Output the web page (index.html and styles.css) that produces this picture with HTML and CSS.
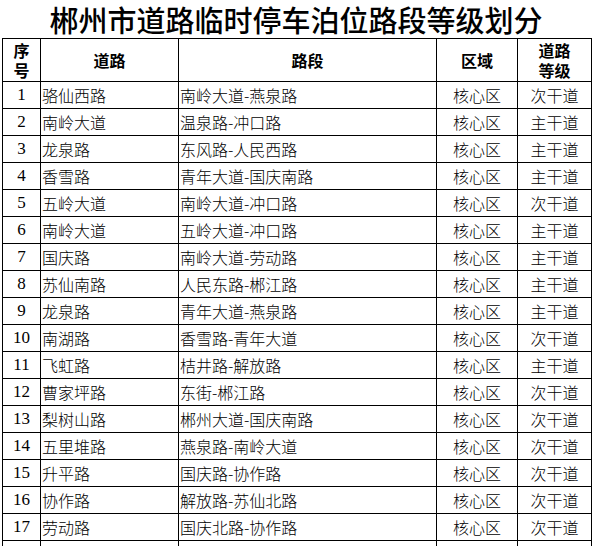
FILE: index.html
```html
<!DOCTYPE html>
<html lang="zh-CN">
<head>
<meta charset="utf-8">
<title>郴州市道路临时停车泊位路段等级划分</title>
<link rel="stylesheet" href="styles.css">
</head>
<body>
<h1 class="title">郴州市道路临时停车泊位路段等级划分</h1>
<table class="grid">
  <colgroup>
    <col class="c-no"><col class="c-road"><col class="c-seg"><col class="c-area"><col class="c-level">
  </colgroup>
  <thead>
    <tr class="head">
      <th>序<br>号</th><th>道路</th><th>路段</th><th>区域</th><th>道路<br>等级</th>
    </tr>
  </thead>
  <tbody>
    <tr><td class="no">1</td><td class="l">骆仙西路</td><td class="l">南岭大道-燕泉路</td><td>核心区</td><td>次干道</td></tr>
    <tr><td class="no">2</td><td class="l">南岭大道</td><td class="l">温泉路-冲口路</td><td>核心区</td><td>主干道</td></tr>
    <tr><td class="no">3</td><td class="l">龙泉路</td><td class="l">东风路-人民西路</td><td>核心区</td><td>主干道</td></tr>
    <tr><td class="no">4</td><td class="l">香雪路</td><td class="l">青年大道-国庆南路</td><td>核心区</td><td>主干道</td></tr>
    <tr><td class="no">5</td><td class="l">五岭大道</td><td class="l">南岭大道-冲口路</td><td>核心区</td><td>次干道</td></tr>
    <tr><td class="no">6</td><td class="l">南岭大道</td><td class="l">五岭大道-冲口路</td><td>核心区</td><td>主干道</td></tr>
    <tr><td class="no">7</td><td class="l">国庆路</td><td class="l">南岭大道-劳动路</td><td>核心区</td><td>主干道</td></tr>
    <tr><td class="no">8</td><td class="l">苏仙南路</td><td class="l">人民东路-郴江路</td><td>核心区</td><td>主干道</td></tr>
    <tr><td class="no">9</td><td class="l">龙泉路</td><td class="l">青年大道-燕泉路</td><td>核心区</td><td>主干道</td></tr>
    <tr><td class="no">10</td><td class="l">南湖路</td><td class="l">香雪路-青年大道</td><td>核心区</td><td>次干道</td></tr>
    <tr><td class="no">11</td><td class="l">飞虹路</td><td class="l">桔井路-解放路</td><td>核心区</td><td>主干道</td></tr>
    <tr><td class="no">12</td><td class="l">曹家坪路</td><td class="l">东街-郴江路</td><td>核心区</td><td>次干道</td></tr>
    <tr><td class="no">13</td><td class="l">梨树山路</td><td class="l">郴州大道-国庆南路</td><td>核心区</td><td>次干道</td></tr>
    <tr><td class="no">14</td><td class="l">五里堆路</td><td class="l">燕泉路-南岭大道</td><td>核心区</td><td>次干道</td></tr>
    <tr><td class="no">15</td><td class="l">升平路</td><td class="l">国庆路-协作路</td><td>核心区</td><td>次干道</td></tr>
    <tr><td class="no">16</td><td class="l">协作路</td><td class="l">解放路-苏仙北路</td><td>核心区</td><td>次干道</td></tr>
    <tr><td class="no">17</td><td class="l">劳动路</td><td class="l">国庆北路-协作路</td><td>核心区</td><td>次干道</td></tr>
    <tr><td class="no"></td><td class="l"></td><td class="l"></td><td></td><td></td></tr>
  </tbody>
</table>
</body>
</html>
```
FILE: styles.css
```css
html {
  overflow: hidden;
  background: #fff;
}
body {
  margin: 0;
  font-family: "Noto Sans CJK SC", "Noto Sans", sans-serif;
  color: #000;
}
.title {
  margin: 0;
  height: 38px;
  display: flex;
  align-items: center;
  justify-content: center;
  font-size: 29px;
  line-height: 36px;
  font-weight: 500;
  letter-spacing: 0;
}
.grid {
  margin-left: 2px;
  border-collapse: collapse;
  table-layout: fixed;
  width: 589px;
}
.c-no { width: 38px; }
.c-road { width: 138px; }
.c-seg { width: 258px; }
.c-area { width: 81px; }
.c-level { width: 74px; }
.grid th,
.grid td {
  border: 1px solid #000;
  padding: 0;
  text-align: center;
  vertical-align: middle;
  font-size: 16px;
  line-height: 18px;
  font-weight: 300;
  white-space: nowrap;
  overflow: hidden;
}
.grid th {
  font-weight: 700;
  line-height: 20.5px;
}
.head {
  height: 43px;
}
.grid tbody tr {
  height: 27px;
}
.grid td.l {
  text-align: left;
  padding-left: 1px;
}
.grid td.no {
  font-family: "Liberation Serif", serif;
  font-size: 17px;
  font-weight: 400;
}
```
